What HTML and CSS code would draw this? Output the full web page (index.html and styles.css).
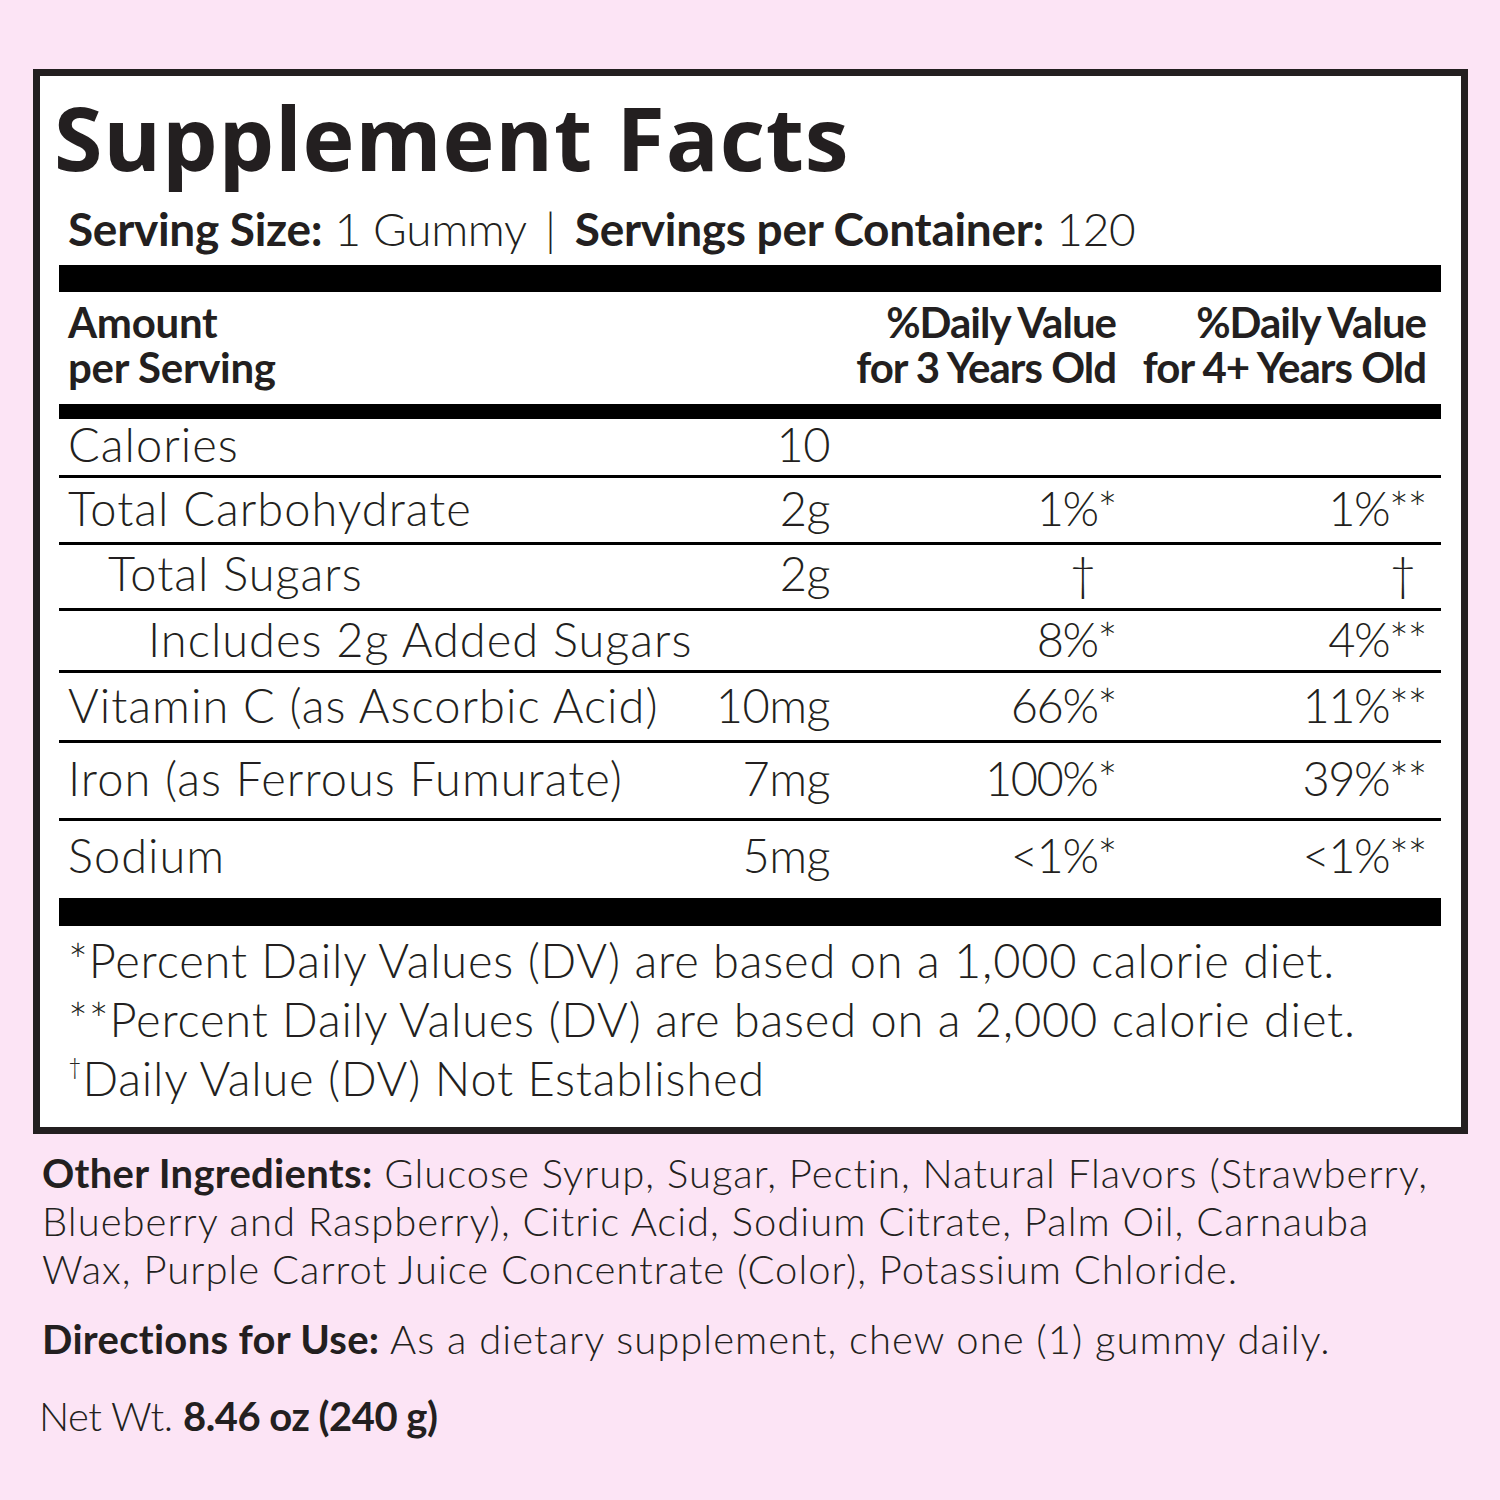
FILE: index.html
```html
<!DOCTYPE html>
<html lang="en">
<head>
<meta charset="utf-8">
<title>Supplement Facts</title>
<link rel="stylesheet" href="styles.css">
</head>
<body>
<div class="panel">
  <h1 class="title">Supplement Facts</h1>
  <p class="serving"><b>Serving Size:</b> 1 Gummy <span class="sep">|</span> <b>Servings per Container:</b> 120</p>
  <div class="bar bar-top"></div>
  <div class="grid head">
    <div class="h-name"><div>Amount</div><div>per Serving</div></div>
    <div class="h-dv"><div>%Daily Value</div><div>for 3 Years Old</div></div>
    <div class="h-dv"><div>%Daily Value</div><div>for 4+ Years Old</div></div>
  </div>
  <div class="bar bar-mid"></div>
  <div class="grid row row-cal"><span class="name">Calories</span><span class="amt">10</span><span class="dv"></span><span class="dv"></span></div>
  <div class="grid row row-carb"><span class="name">Total Carbohydrate</span><span class="amt">2g</span><span class="dv">1%*</span><span class="dv">1%**</span></div>
  <div class="grid row row-sug"><span class="name indent-1">Total Sugars</span><span class="amt">2g</span><span class="dv dag-a">†</span><span class="dv dag-b">†</span></div>
  <div class="grid row row-inc"><span class="name indent-2">Includes 2g Added Sugars</span><span class="amt"></span><span class="dv">8%*</span><span class="dv">4%**</span></div>
  <div class="grid row row-vit"><span class="name">Vitamin C (as Ascorbic Acid)</span><span class="amt">10mg</span><span class="dv">66%*</span><span class="dv">11%**</span></div>
  <div class="grid row row-iron"><span class="name">Iron (as Ferrous Fumurate)</span><span class="amt">7mg</span><span class="dv">100%*</span><span class="dv">39%**</span></div>
  <div class="grid row row-sod"><span class="name">Sodium</span><span class="amt">5mg</span><span class="dv">&lt;1%*</span><span class="dv">&lt;1%**</span></div>
  <div class="bar bar-bottom"></div>
  <div class="foot">
    <div>*Percent Daily Values (DV) are based on a 1,000 calorie diet.</div>
    <div>**Percent Daily Values (DV) are based on a 2,000 calorie diet.</div>
    <div><sup class="sup">†</sup>Daily Value (DV) Not Established</div>
  </div>
</div>
<div class="notes">
  <p class="ingredients"><b>Other Ingredients:</b> Glucose Syrup, Sugar, Pectin, Natural Flavors (Strawberry,<br>Blueberry and Raspberry), Citric Acid, Sodium Citrate, Palm Oil, Carnauba<br>Wax, Purple Carrot Juice Concentrate (Color), Potassium Chloride.</p>
  <p class="directions"><b>Directions for Use:</b> As a dietary supplement, chew one (1) gummy daily.</p>
  <p class="netwt">Net Wt. <b>8.46 oz (240 g)</b></p>
</div>
</body>
</html>
```

FILE: styles.css
```css
html, body {
  margin: 0;
}

body {
  background: #fce4f5;
  color: #231f20;
  font-family: Lato, "Liberation Sans", sans-serif;
  padding-top: 69px;
  width: 1500px;
  height: 1431px;
  overflow: hidden;
}

.panel {
  box-sizing: border-box;
  width: 1435px;
  margin-left: 33px;
  border: 7px solid #231f20;
  background: #fff;
  padding: 11px 20px 19px 19px;
}

.title {
  margin: 0 0 0 -5px;
  height: 100px;
  font: 700 88px/100px "Open Sans", sans-serif;
  letter-spacing: 0.8px;
  white-space: nowrap;
}

.serving {
  margin: 14px 0 0 9px;
  font: 300 46px/56px Lato, sans-serif;
  letter-spacing: -0.3px;
  white-space: nowrap;
}

.serving b {
  font-weight: 700;
}

.sep {
  font-weight: 300;
  padding: 0 7px;
}

.bar {
  background: #000;
}

.bar-top {
  height: 27px;
  margin-top: 8px;
}

.bar-mid {
  height: 15px;
}

.bar-bottom {
  height: 28px;
}

.grid {
  display: grid;
  grid-template-columns: minmax(0, 1fr) 150px 286px 310px;
  padding: 0 15px 0 9px;
}

.head {
  padding-top: 8px;
  padding-bottom: 14px;
  font: 700 42px/45px Lato, sans-serif;
  letter-spacing: -1px;
}

.head div div {
  height: 45px;
}

.h-name {
  grid-column: span 2;
  letter-spacing: -0.3px;
}

.h-dv {
  text-align: right;
  white-space: nowrap;
}

.row {
  box-sizing: border-box;
  align-items: start;
  border-bottom: 3px solid #000;
  font: 300 47px/50px Lato, sans-serif;
  letter-spacing: 1px;
  white-space: nowrap;
}

.row .amt {
  text-align: right;
  letter-spacing: -0.5px;
}

.row .dv {
  text-align: right;
  letter-spacing: -1.5px;
}

.row-cal { height: 59px; padding-top: 0; }
.row-carb { height: 67px; padding-top: 5px; }
.row-sug { height: 66px; padding-top: 3px; }
.row-inc { height: 62px; padding-top: 3px; }
.row-vit { height: 70px; padding-top: 7px; }
.row-iron { height: 78px; padding-top: 10px; }
.row-sod { height: 77px; padding-top: 9px; border-bottom: 0; }

.indent-1 { padding-left: 40px; }
.indent-2 { padding-left: 80px; }

.dag-a { padding-right: 21px; }
.dag-b { padding-right: 11px; }

.foot {
  padding: 5px 0 0 9px;
  font: 300 47px/59px Lato, sans-serif;
  letter-spacing: 0.8px;
  white-space: nowrap;
}

.sup {
  font-size: 0.5em;
  line-height: 0;
  vertical-align: 0.9em;
}

.notes {
  margin: 15px 0 0 42px;
  font: 300 40px/48px Lato, sans-serif;
  letter-spacing: 1px;
  white-space: nowrap;
}

.notes p {
  margin: 0;
}

.notes b {
  font-weight: 700;
  letter-spacing: 0.3px;
}

.directions {
  margin-top: 22px !important;
}

.netwt {
  margin-top: 29px !important;
  margin-left: -3px !important;
  letter-spacing: -0.5px;
}

.netwt b {
  letter-spacing: -0.5px;
}
```
